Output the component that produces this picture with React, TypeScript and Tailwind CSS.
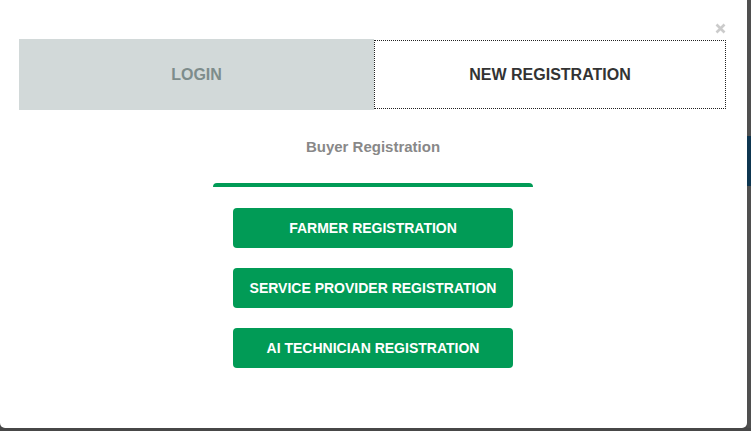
import React from 'react';

const font = { fontFamily: '"Liberation Sans", Arial, sans-serif' };

function RegButton({ label }: { label: string }) {
  return (
    <button className="w-[280px] h-[40px] rounded-[4px] bg-[#019b56] text-white text-[14px] font-bold uppercase flex items-center justify-center">
      {label}
    </button>
  );
}

export default function App() {
  return (
    <div className="w-[751px] h-[431px] bg-[#474747] flex flex-col overflow-hidden" style={font}>
      <div className="flex h-[428px]">
        {/* modal panel */}
        <div className="relative w-[747px] h-[428px] pr-[1px] bg-white rounded-b-[5px] flex flex-col items-center">
          <button className="absolute top-[23px] right-[21px] w-[11px] h-[11px]" aria-label="close">
            <svg viewBox="0 0 11 11" className="w-[11px] h-[11px]">
              <path d="M1.5 1.5 L9.5 9.5 M9.5 1.5 L1.5 9.5" stroke="#cbcbcb" strokeWidth="2.6" strokeLinecap="butt" />
            </svg>
          </button>

          {/* tabs */}
          <div className="mt-[39px] w-[707px] h-[71px] flex self-start ml-[19px]">
            <div className="w-[355px] h-full bg-[#d2d9d9] flex items-center justify-center">
              <span className="text-[16px] font-bold text-[#7d8c8b]">LOGIN</span>
            </div>
            <div className="w-[352px] h-full py-[1px]">
              <div className="w-full h-full border border-dotted border-[#222] flex items-center justify-center">
                <span className="text-[16px] font-bold text-[#333] whitespace-nowrap">NEW REGISTRATION</span>
              </div>
            </div>
          </div>

          <div className="mt-[27px] h-[20px] text-[15px] leading-[20px] font-bold text-[#888]">
            Buyer Registration
          </div>

          <div className="mt-[26px] w-[320px] h-[4px] bg-[#019b56] rounded-t-[4px]" />

          <div className="mt-[21px] flex flex-col gap-[20px]">
            <RegButton label="Farmer Registration" />
            <RegButton label="Service Provider Registration" />
            <RegButton label="AI Technician Registration" />
          </div>
        </div>

        {/* page behind the overlay */}
        <div className="w-[4px] flex flex-col">
          <div className="h-[136px] bg-[#4f4f4f]" />
          <div className="h-[50px] bg-[#0e3650]" />
          <div className="flex-1 bg-[#4f4f4f]" />
        </div>
      </div>
    </div>
  );
}
